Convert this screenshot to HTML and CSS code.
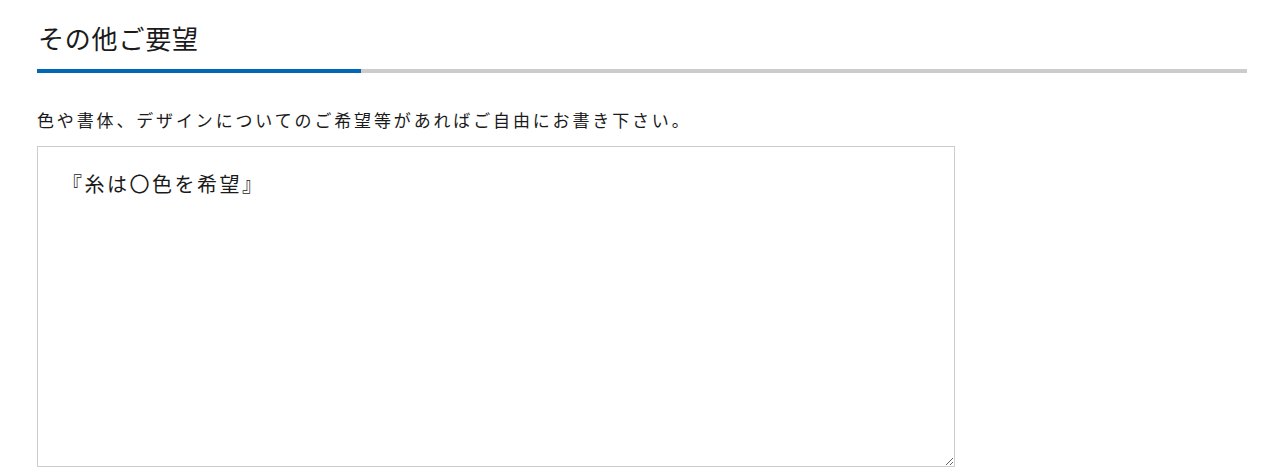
FILE: index.html
```html
<!DOCTYPE html>
<html lang="ja">
<head>
    <meta charset="UTF-8">
    <title>その他ご要望</title>
    <link rel="stylesheet" href="styles.css">
</head>
<body>
    <section class="request">
        <h2 class="request-title">その他ご要望</h2>
        <p class="request-note">色や書体、デザインについてのご希望等があればご自由にお書き下さい。</p>
        <textarea class="request-input" placeholder="『糸は〇色を希望』"></textarea>
    </section>
</body>
</html>
```

FILE: styles.css
```css
body {
    margin: 0;
    background: #ffffff;
    color: #1a1a1a;
    font-family: "Noto Sans CJK JP", "Noto Sans", sans-serif;
}

.request {
    width: 1210px;
    padding: 18px 0 0 37px;
}

.request-title {
    margin: 0;
    padding: 0 0 11px 1px;
    font-size: 26px;
    font-weight: 400;
    line-height: 40px;
    letter-spacing: 0.8px;
    border-bottom: 4px solid #cccccc;
    position: relative;
}

.request-title::after {
    content: "";
    position: absolute;
    left: 0;
    bottom: -4px;
    width: 324px;
    height: 4px;
    background: #0068b7;
}

.request-note {
    margin: 35px 0 14px;
    font-size: 17px;
    line-height: 24px;
    letter-spacing: 2.85px;
}

.request-input {
    display: block;
    box-sizing: border-box;
    width: 918px;
    height: 321px;
    padding: 23px 24px;
    border: 1px solid #cccccc;
    font-family: inherit;
    font-size: 20px;
    line-height: 28px;
    letter-spacing: 2.5px;
    color: #1a1a1a;
    resize: vertical;
}

.request-input::placeholder {
    color: #1a1a1a;
    opacity: 1;
}
```
